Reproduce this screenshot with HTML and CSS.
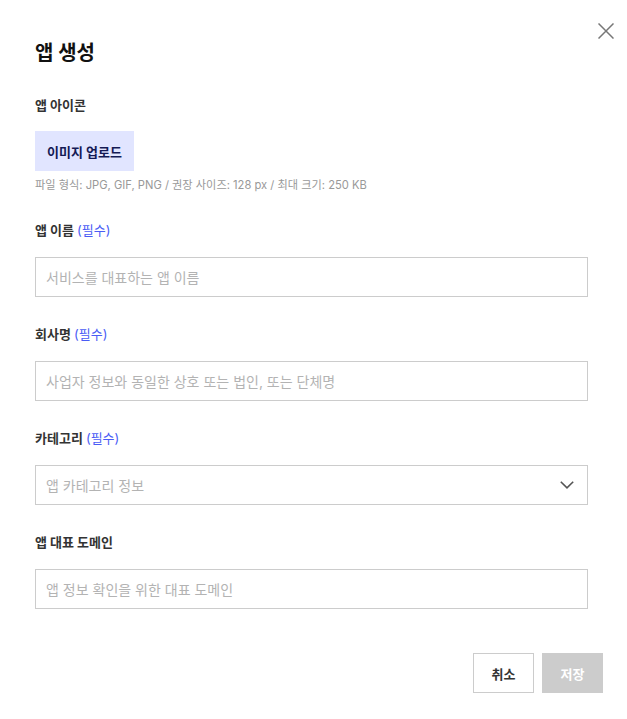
FILE: index.html
```html
<!DOCTYPE html>
<html lang="ko">
<head>
<meta charset="utf-8">
<title>앱 생성</title>
<link rel="stylesheet" href="styles.css">
</head>
<body>
<div class="dialog">
  <button class="close" aria-label="닫기">
    <svg width="16" height="16" viewBox="0 0 16 16"><path d="M0.5 0.5 L15.5 15.5 M15.5 0.5 L0.5 15.5" stroke="#777" stroke-width="1.5" fill="none"/></svg>
  </button>
  <h1 class="title">앱 생성</h1>

  <div class="field">
    <div class="label">앱 아이콘</div>
    <div class="upload-wrap">
      <button class="upload">이미지 업로드</button>
      <div class="hint">파일 형식: JPG, GIF, PNG / 권장 사이즈: 128 px / 최대 크기: 250 KB</div>
    </div>
  </div>

  <div class="field">
    <div class="label">앱 이름 <span class="req">(필수)</span></div>
    <div class="input"><span class="ph">서비스를 대표하는 앱 이름</span></div>
  </div>

  <div class="field">
    <div class="label">회사명 <span class="req">(필수)</span></div>
    <div class="input"><span class="ph">사업자 정보와 동일한 상호 또는 법인, 또는 단체명</span></div>
  </div>

  <div class="field">
    <div class="label">카테고리 <span class="req">(필수)</span></div>
    <div class="input select"><span class="ph">앱 카테고리 정보</span>
      <svg width="14" height="8" viewBox="0 0 14 8"><path d="M0.8 0.8 L7 6.8 L13.2 0.8" stroke="#555" stroke-width="1.6" fill="none"/></svg>
    </div>
  </div>

  <div class="field">
    <div class="label">앱 대표 도메인</div>
    <div class="input"><span class="ph">앱 정보 확인을 위한 대표 도메인</span></div>
  </div>

  <div class="actions">
    <button class="btn cancel">취소</button>
    <button class="btn save">저장</button>
  </div>
</div>
</body>
</html>
```

FILE: styles.css
```css
* { box-sizing: border-box; }
html, body { margin: 0; padding: 0; background: #fff; }
body {
  font-family: "Inter", "Noto Sans CJK KR", sans-serif;
  color: #333;
}
.dialog {
  position: relative;
  width: 622px;
  height: 719px;
  padding: 39px 34px 0 35px;
  display: flex;
  flex-direction: column;
  background: #fff;
}
.close {
  position: absolute;
  top: 23px;
  left: 598px;
  width: 16px;
  height: 16px;
  padding: 0;
  border: 0;
  background: none;
  display: flex;
}
.title {
  margin: 0;
  font-size: 20px;
  line-height: 28px;
  font-weight: 700;
  color: #111;
}
.field {
  display: flex;
  flex-direction: column;
  gap: 17px;
  margin-top: 28px;
}
.field + .field { margin-top: 27px; }
.label {
  font-size: 13px;
  line-height: 20px;
  font-weight: 700;
  color: #333;
}
.req {
  color: #4a5cf5;
  font-weight: 400;
}
.upload-wrap {
  display: flex;
  flex-direction: column;
  align-items: flex-start;
  gap: 6px;
  margin-top: -1px;
}
.upload {
  width: 99px;
  height: 40px;
  border: 0;
  padding: 0;
  background: #e1e5ff;
  color: #141a55;
  font-family: inherit;
  font-size: 13px;
  font-weight: 700;
}
.hint {
  font-size: 11.2px;
  line-height: 16px;
  color: #999;
}
.input {
  height: 40px;
  border: 1px solid #ccc;
  display: flex;
  align-items: center;
  justify-content: space-between;
  padding: 0 13px 0 10px;
}
.ph {
  font-size: 14px;
  color: #b3b3b3;
}
.select svg { display: block; }
.actions {
  display: flex;
  justify-content: flex-end;
  gap: 8px;
  margin-top: 44px;
  margin-right: -15px;
}
.btn {
  width: 61px;
  height: 40px;
  font-family: inherit;
  font-size: 13px;
  font-weight: 700;
  padding: 0;
}
.cancel {
  background: #fff;
  border: 1px solid #ccc;
  color: #333;
}
.save {
  background: #ccc;
  border: 0;
  color: #fff;
}
```
